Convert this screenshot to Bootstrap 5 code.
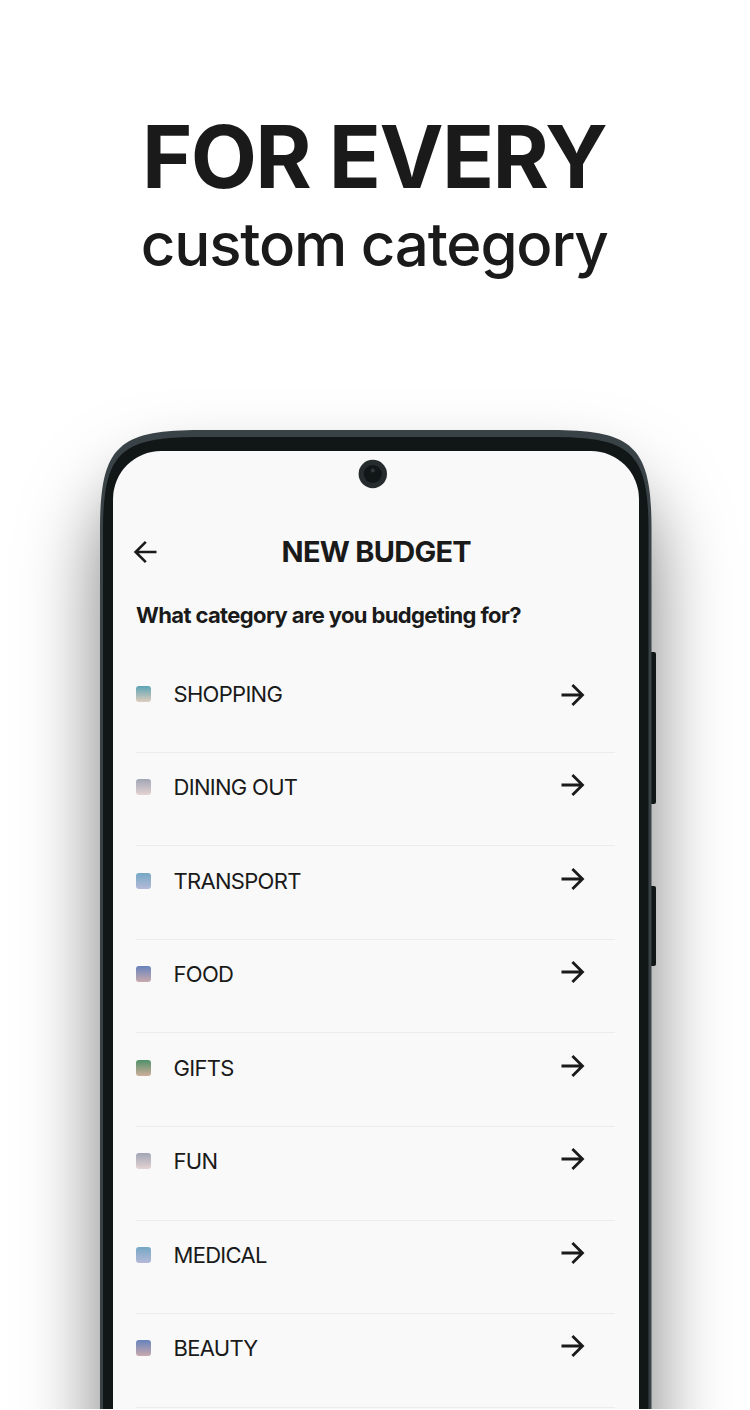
<!DOCTYPE html>
<html lang="en">
<head>
<meta charset="utf-8">
<meta name="viewport" content="width=device-width, initial-scale=1">
<title>New budget</title>
<link href="https://cdn.jsdelivr.net/npm/bootstrap@5.3.0/dist/css/bootstrap.min.css" rel="stylesheet">
<style>
  body { font-family: Inter, "Liberation Sans", sans-serif; color: #1a1a1a; background: #fff; }
  .stage { width: 750px; height: 1409px; }
  .hero { height: 430px; padding-top: 105px; }
  .hero-title { font-size: 86px; line-height: 104px; font-weight: 700; letter-spacing: -1.65px; padding-right: 2px; }
  .hero-sub { font-size: 60px; line-height: 70px; font-weight: 500; letter-spacing: -1.2px; padding-right: 1.5px; }
  .phone { height: 979px; padding: 21px 111.5px 0 113px; }
  .shadow-shape { left: 101px; top: 0; width: 550px; height: 1250px; border-radius: 80px; box-shadow: 0 50px 78px rgba(0,0,0,.52); }
  .frame { left: 0; top: 0; }
  .screen { height: 958px; border-radius: 48px 48px 0 0; background: #f9f9f9; padding: 0 23.5px 0 23px; }
  .topbar { height: 72px; margin-top: 65px; }
  .topbar h2 { font-size: 29px; line-height: 36px; letter-spacing: -.75px; padding-left: 1.5px; }
  .back { left: -3.5px; top: 24px; }
  .question { font-size: 22px; line-height: 28px; letter-spacing: -.63px; margin-top: 13px; }
  .cats { padding-top: 30.3px; }
  .cat { height: 93.55px; border-bottom: 1.5px solid #ececec; padding-top: 20.3px; gap: 22.5px; font-size: 22px; line-height: 28px; letter-spacing: -.7px; font-weight: 430; }
  .swatch { width: 15px; height: 16px; border-radius: 3px; margin-top: 6px; }
  .go { margin: -1.2px 29px 0 auto; }
  .cat:first-child .go { margin-top: 2px; }
  .teal { background: linear-gradient(#5ca4b5, #dfcdbd); }
  .mauve { background: linear-gradient(#a0a6b5, #e5d3d3); }
  .sky { background: linear-gradient(#75a8c6, #b5b9d8); }
  .indigo { background: linear-gradient(#6782bd, #c9aaad); }
  .green { background: linear-gradient(#4f9068, #cfae9c); }
</style>
</head>
<body>
<main class="stage position-relative overflow-hidden">
  <header class="hero text-center">
    <h1 class="hero-title m-0">FOR EVERY</h1>
    <p class="hero-sub m-0">custom category</p>
  </header>
  <section class="phone position-relative">
    <div class="shadow-shape position-absolute"></div>
    <svg class="frame position-absolute" width="750" height="979" viewBox="0 430 750 979">
      <rect x="648" y="652" width="8" height="152" rx="2" fill="#111616"/>
      <rect x="648" y="886" width="8" height="80" rx="2" fill="#111616"/>
      <path fill="#394246" d="M100 1420V530C100 447 117 430 200 430H551.5C634.500 430 651.500 447 651.500 530V1420Z"/>
      <path fill="#111616" d="M103 1420V532C103 452 120 437 200 437H551.500C631.500 437 648.500 452 648.500 532V1420Z"/>
    </svg>
    <svg class="frame position-absolute z-2" width="750" height="70" viewBox="0 430 750 70">
      <circle cx="372.800" cy="474" r="14.200" fill="#262c2e"/>
      <circle cx="372.800" cy="474" r="9" fill="#111616"/>
      <circle cx="372.800" cy="470.500" r="2" fill="#32383a"/>
    </svg>
    <div class="screen position-relative overflow-hidden">
      <div class="topbar position-relative d-flex align-items-center justify-content-center">
        <svg class="back position-absolute" width="24" height="24" viewBox="0 0 24 24" fill="none" stroke="#1a1a1a" stroke-width="2.600"><path d="M23.500 12H3M12.800 1.800L2.600 12l10.200 10.200"/></svg>
        <h2 class="fw-bold m-0">NEW BUDGET</h2>
      </div>
      <h3 class="question fw-bold mb-0">What category are you budgeting for?</h3>
      <div class="cats" id="cats">
        <div class="cat d-flex align-items-start"><span class="swatch teal"></span><span>SHOPPING</span></div>
        <div class="cat d-flex align-items-start"><span class="swatch mauve"></span><span>DINING OUT</span></div>
        <div class="cat d-flex align-items-start"><span class="swatch sky"></span><span>TRANSPORT</span></div>
        <div class="cat d-flex align-items-start"><span class="swatch indigo"></span><span>FOOD</span></div>
        <div class="cat d-flex align-items-start"><span class="swatch green"></span><span>GIFTS</span></div>
        <div class="cat d-flex align-items-start"><span class="swatch mauve"></span><span>FUN</span></div>
        <div class="cat d-flex align-items-start"><span class="swatch sky"></span><span>MEDICAL</span></div>
        <div class="cat d-flex align-items-start"><span class="swatch indigo"></span><span>BEAUTY</span></div>
      </div>
    </div>
  </section>
</main>
<script src="https://cdn.jsdelivr.net/npm/bootstrap@5.3.0/dist/js/bootstrap.bundle.min.js"></script>
<script>
  document.querySelectorAll('.cat').forEach(function (row) {
    row.insertAdjacentHTML('beforeend', '<svg class="go" width="26" height="26" viewBox="0 0 26 26" fill="none" stroke="#1a1a1a" stroke-width="2.800"><path d="M1.500 13H23M12.400 2.900L22.500 13L12.400 23.100"/></svg>');
  });
</script>
</body>
</html>
